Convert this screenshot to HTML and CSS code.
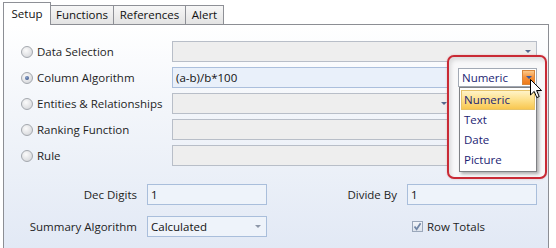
FILE: index.html
```html
<!DOCTYPE html>
<html lang="en">
<head>
    <meta charset="UTF-8">
    <title>Column Setup</title>
    <link rel="stylesheet" href="styles.css">
</head>
<body>
    <div class="tabs">
        <div class="tab active" style="width: 48px;">Setup</div>
        <div class="tab" style="width: 64px;">Functions</div>
        <div class="tab" style="width: 73px;">References</div>
        <div class="tab" style="width: 39px;">Alert</div>
    </div>

    <div class="panel">
        <div class="options">
            <label class="opt"><span class="radio"></span>Data Selection</label>
            <div class="field"><span></span><span class="arrow"></span></div>

            <label class="opt"><span class="radio checked"></span>Column Algorithm</label>
            <div class="split">
                <div class="field text">(a-b)/b*100</div>
                <div class="type-combo">
                    <span>Numeric</span>
                    <span class="orange-btn"><span class="arrow"></span></span>
                    <ul class="type-list">
                        <li class="selected">Numeric</li>
                        <li>Text</li>
                        <li>Date</li>
                        <li>Picture</li>
                    </ul>
                    <svg class="cursor" width="13" height="20" viewBox="0 0 13 20">
                        <path d="M0.5 0.5 L0.5 16 L4.2 12.4 L6.8 18.6 L9.2 17.6 L6.6 11.5 L11.6 11.5 Z" fill="#fff" stroke="#000" stroke-width="1"/>
                    </svg>
                </div>
            </div>

            <label class="opt"><span class="radio"></span>Entities &amp; Relationships</label>
            <div class="field narrow"><span></span><span class="arrow"></span></div>

            <label class="opt"><span class="radio"></span>Ranking Function</label>
            <div class="field"></div>

            <label class="opt"><span class="radio"></span>Rule</label>
            <div class="field"></div>
        </div>

        <div class="extras">
            <span class="label">Dec Digits</span>
            <div class="field light">1</div>
            <span class="label">Divide By</span>
            <div class="field light">1</div>

            <span class="label">Summary Algorithm</span>
            <div class="field light">Calculated<span class="arrow gray"></span></div>
            <span></span>
            <label class="check">
                <span class="box">
                    <svg width="9" height="9" viewBox="0 0 9 9"><path d="M1.5 4.5 L3.6 7.2 L7.6 1.2" fill="none" stroke="#7186a6" stroke-width="1.8"/></svg>
                </span>
                Row Totals
            </label>
        </div>

        <div class="callout"></div>
    </div>
</body>
</html>
```

FILE: styles.css
```css
body {
    margin: 0;
    background-color: #fff;
    font-family: "Open Sans", sans-serif;
    font-size: 11.5px;
    color: #1e1e1e;
}
.tabs {
    display: flex;
    align-items: flex-end;
    height: 22px;
    padding: 2px 0 0 3px;
}
.tab {
    box-sizing: border-box;
    height: 19px;
    margin-left: -1px;
    border: 1px solid #8e9096;
    border-bottom: none;
    background: linear-gradient(#f7f7f7, #e3e3e3);
    text-align: center;
    line-height: 18px;
    color: #111;
}
.tab.active {
    position: relative;
    z-index: 2;
    height: 23px;
    margin-left: 0;
    margin-bottom: -1px;
    background: #fff;
    line-height: 21px;
}
.panel {
    position: relative;
    box-sizing: border-box;
    width: 546px;
    height: 224px;
    margin-left: 3px;
    padding: 16px 10px 0 17px;
    border: 1px solid #8c8e94;
    border-bottom: none;
    background: linear-gradient(#ffffff, #f2f5fa 40%, #e2e9f5);
}
.options {
    display: grid;
    grid-template-columns: 151px 365px;
    grid-auto-rows: 21px;
    row-gap: 5px;
}
.opt {
    display: flex;
    align-items: center;
    gap: 4px;
}
.radio {
    box-sizing: border-box;
    width: 12px;
    height: 12px;
    border-radius: 50%;
    border: 1px solid #a4a8ae;
    background: radial-gradient(circle at 40% 35%, #fbfbfb, #dcdde0 70%, #c9cbcf);
    display: flex;
    align-items: center;
    justify-content: center;
}
.radio.checked::after {
    content: "";
    width: 4px;
    height: 4px;
    border-radius: 50%;
    background: radial-gradient(circle at 40% 35%, #8aa2cc, #2b4579);
}
.field {
    box-sizing: border-box;
    height: 21px;
    display: flex;
    align-items: center;
    justify-content: space-between;
    padding: 0 5px 0 3px;
    border: 1px solid #b8bec8;
    background-color: #eeeeee;
    color: #111;
}
.field.text {
    background-color: #e9f0fa;
    border-color: #abbfdc;
}
.field.light {
    background-color: #eef3fa;
    border-color: #a9bedb;
}
.field.narrow {
    width: 281px;
}
.arrow {
    width: 0;
    height: 0;
    border-left: 3px solid transparent;
    border-right: 3px solid transparent;
    border-top: 3px solid #56688c;
}
.arrow.gray {
    border-top-color: #8d97a8;
}
.split {
    display: grid;
    grid-template-columns: 281px 79px;
    column-gap: 5px;
    align-items: center;
}
.type-combo {
    position: relative;
    z-index: 2;
    box-sizing: border-box;
    height: 19px;
    display: flex;
    align-items: center;
    justify-content: space-between;
    padding-left: 3px;
    border: 1px solid #a3aab5;
    background-color: #fff;
    color: #1c2473;
}
.orange-btn {
    box-sizing: border-box;
    width: 13px;
    height: 15px;
    margin-right: 1px;
    display: flex;
    align-items: center;
    justify-content: center;
    border: 1px solid #d9863a;
    background: linear-gradient(#fcc98a, #f5913a 50%, #ef7a18);
}
.orange-btn .arrow {
    border-top-color: #3a5aa0;
}
.type-list {
    position: absolute;
    left: 0;
    top: 18px;
    box-sizing: border-box;
    width: 78px;
    margin: 0;
    padding: 2px 1px 1px 1px;
    list-style: none;
    border: 1px solid #7f8185;
    background-color: #fff;
    box-shadow: 2px 2px 3px rgba(0, 0, 0, 0.3);
}
.type-list li {
    box-sizing: border-box;
    height: 20px;
    line-height: 18px;
    padding-left: 2px;
    border: 1px solid transparent;
    color: #1c2473;
}
.type-list li.selected {
    border-color: #e6c36a;
    background: linear-gradient(#fff3c8, #fde08a 50%, #f8c750);
}
.cursor {
    position: absolute;
    left: 71px;
    top: 10px;
    z-index: 3;
}
.callout {
    position: absolute;
    left: 443px;
    top: 30px;
    z-index: 1;
    box-sizing: border-box;
    width: 100px;
    height: 124px;
    border: 2px solid #c92a35;
    border-radius: 7px;
    background-color: #f8f8f9;
    box-shadow: inset 2px 3px 4px rgba(0, 0, 0, 0.12), 0 0 2px rgba(200, 40, 50, 0.3);
}
.extras {
    display: grid;
    grid-template-columns: 133px 120px 120px 130px;
    grid-auto-rows: 21px;
    column-gap: 10px;
    row-gap: 11px;
    margin: 18px 0 0 -17px;
}
.label {
    align-self: center;
    text-align: right;
}
.check {
    display: flex;
    align-items: center;
    gap: 4px;
    padding-left: 5px;
}
.box {
    box-sizing: border-box;
    width: 11px;
    height: 11px;
    display: flex;
    align-items: center;
    justify-content: center;
    border: 1px solid #9aa7ba;
    background: linear-gradient(#f3f5f9, #dde3ec);
}
```
